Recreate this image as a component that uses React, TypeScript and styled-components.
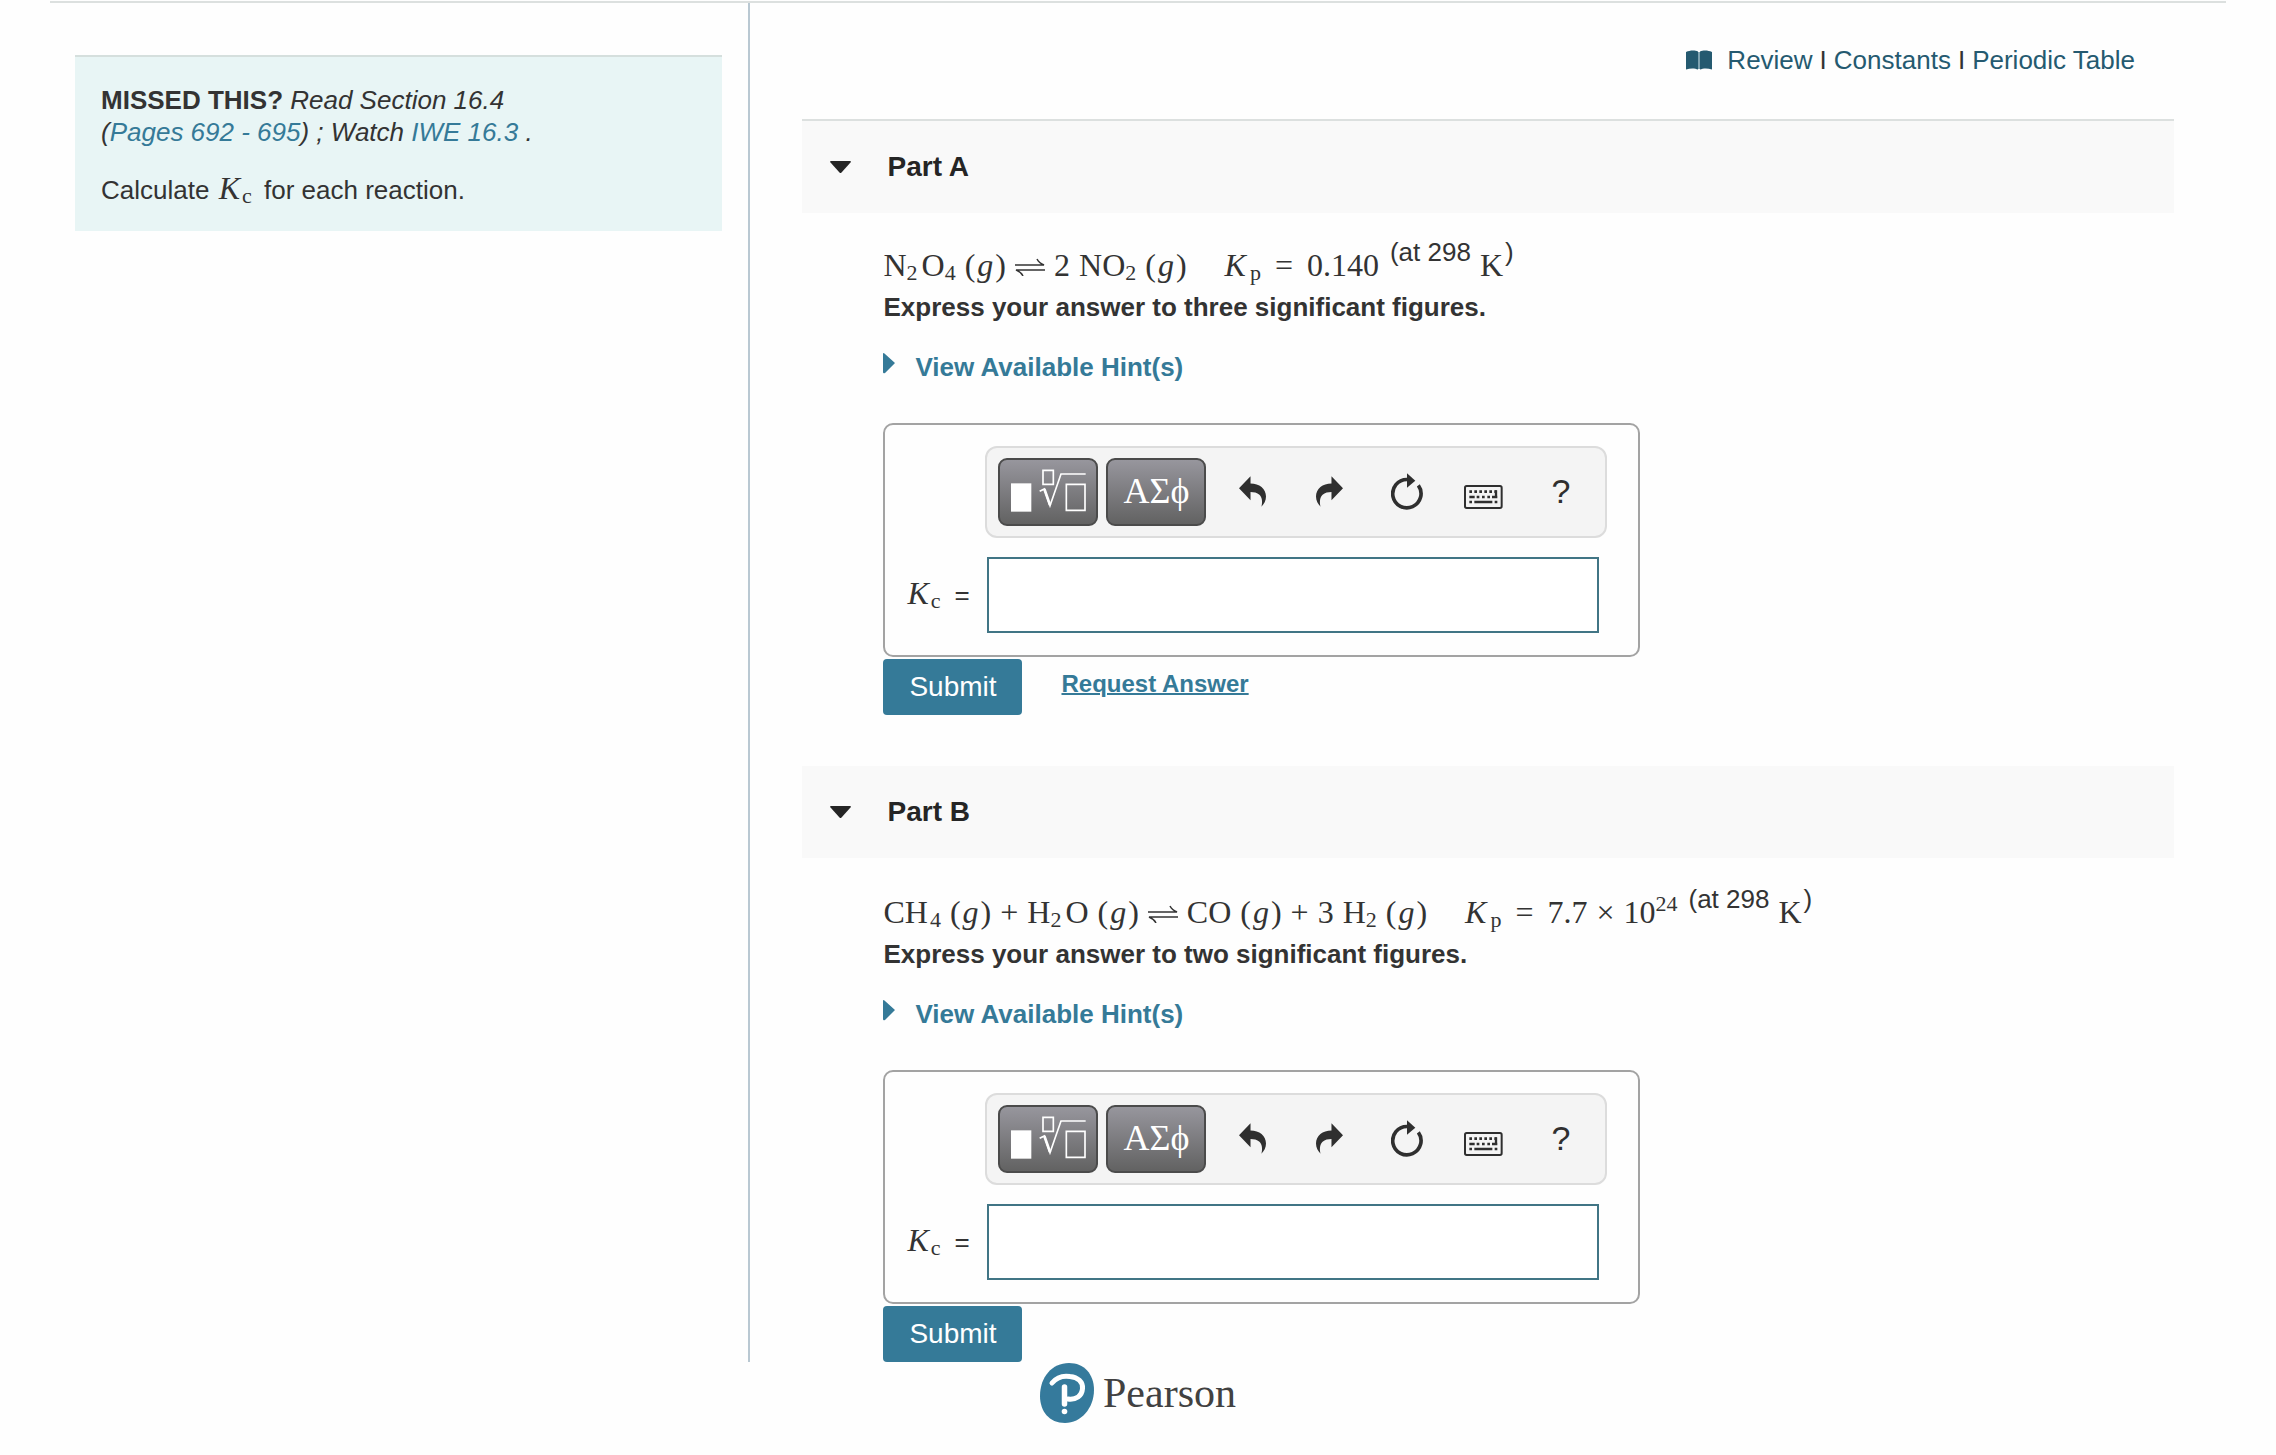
import React from "react";
import styled, { createGlobalStyle } from "styled-components";

const sans = `"Liberation Sans", Helvetica, Arial, sans-serif`;
const serif = `"Liberation Serif", "Times New Roman", serif`;

const colors = {
  ink: "#333333",
  heading: "#252525",
  link: "#357a98",
  darkLink: "#255a70",
  rule: "#dce0df",
  divider: "#b9c8d2",
};

const GlobalStyle = createGlobalStyle`
  *, *::before, *::after { box-sizing: border-box; }
  body {
    margin: 0;
    background: #fefefe;
    color: ${colors.ink};
    font: 26px/32px ${sans};
  }
  h2, p { margin: 0; }
  a { color: inherit; text-decoration: none; }
  button { font: inherit; cursor: pointer; border: 0; background: none; padding: 0; }
  svg { display: block; }
`;

const Page = styled.div`
  padding: 1px 50px 0;
`;

const Columns = styled.div`
  display: grid;
  grid-template-columns: 32.1% minmax(0, 1fr);
  border-top: 2px solid ${colors.rule};
`;

const Sidebar = styled.aside`
  padding: 52px 26px 0 25px;
`;

const Notice = styled.section`
  padding: 27px 26px 25px;
  border-top: 2px solid #d5dfdd;
  background: #e8f5f5;
`;

const NoticeLead = styled.p`
  margin-bottom: 26px;
  font-style: italic;

  strong { font-style: normal; }
  a { color: ${colors.link}; }
`;

const Content = styled.main`
  padding: 41px 52px 0;
  border-left: 2px solid ${colors.divider};
`;

const Resources = styled.nav`
  display: flex;
  justify-content: flex-end;
  align-items: center;
  gap: 7px;
  padding-right: 39px;
  margin-bottom: 43px;

  a { color: ${colors.darkLink}; }
  svg { margin-right: 8px; }
`;

const Part = styled.section`
  & + & { margin-top: 51px; }
`;

const PartHeader = styled.header<{ $ruled?: boolean }>`
  border-top: ${(p) => (p.$ruled ? `2px solid ${colors.rule}` : "0")};
  margin-bottom: ${(p) => (p.$ruled ? 0 : 2)}px;
  background: #f9f9f9;
`;

const PartToggle = styled.button`
  display: flex;
  align-items: center;
  gap: 36px;
  width: 100%;
  height: 92px;
  padding: 0 28px;
  color: ${colors.heading};
  font-size: 28px;
  font-weight: bold;
`;

const PartBody = styled.div`
  padding: 32px 0 0 81px;
`;

const Equation = styled.p`
  margin-bottom: 6px;
  font-family: ${serif};
  font-size: 32px;
  line-height: 40px;
  white-space: nowrap;
`;

const gaps = { none: 0, hair: 2, thin: 4, mid: 9, loose: 11, wide: 14, quad: 38 };
type GapName = keyof typeof gaps;

const Term = styled.span<{ $gap?: GapName }>`
  margin-left: ${(p) => gaps[p.$gap ?? "none"]}px;
  font-family: ${serif};
  font-size: 32px;
  line-height: 0;
`;

const Variable = styled(Term)`
  font-style: italic;
`;

const Sub = styled.sub<{ $gap?: GapName }>`
  margin-left: ${(p) => gaps[p.$gap ?? "none"]}px;
  font-family: ${serif};
  font-size: 22px;
  font-style: normal;
  line-height: 0;
  vertical-align: -4px;
`;

const Sup = styled.sup`
  font-size: 22px;
  line-height: 0;
  vertical-align: 12px;
`;

const Raised = styled.sup<{ $gap?: GapName }>`
  margin-left: ${(p) => gaps[p.$gap ?? "none"]}px;
  font-family: ${sans};
  font-size: 26px;
  line-height: 0;
  vertical-align: 15px;
`;

const InlineMath = styled.span`
  margin: 0 5px 0 2px;
`;

const Harpoons = styled.svg`
  display: inline-block;
  margin-left: 9px;
`;

const Instruction = styled.p`
  margin-bottom: 28px;
  font-weight: bold;
`;

const HintButton = styled.button`
  display: flex;
  gap: 20px;
  margin-bottom: 40px;
  color: ${colors.link};
  font-weight: bold;
`;

const AnswerBox = styled.div`
  display: grid;
  grid-template-columns: 100px minmax(0, 1fr);
  row-gap: 19px;
  align-items: center;
  max-width: 757px;
  padding: 21px 31px 22px 0;
  border: 2px solid #a3a3a3;
  border-radius: 10px;
`;

const Toolbar = styled.div`
  grid-column: 2;
  display: flex;
  align-items: center;
  gap: 8px;
  height: 92px;
  padding-left: 11px;
  border: 2px solid #dcdcdc;
  border-radius: 12px;
  background: #f4f4f4;
`;

const PaletteButton = styled.button`
  display: flex;
  flex: none;
  align-items: center;
  justify-content: center;
  width: 100px;
  height: 68px;
  padding-bottom: 3px;
  border: 2px solid #4b4b4b;
  border-radius: 9px;
  background: linear-gradient(#97969d, #626262);
  color: #ffffff;
  font-family: ${serif};
  font-size: 36px;
`;

const Tools = styled.div`
  display: flex;
`;

const ToolButton = styled.button`
  display: flex;
  align-items: center;
  justify-content: center;
  width: 77px;
  height: 68px;
  padding-bottom: 2px;
  color: #2f2f2f;
  font-size: 34px;
`;

const AnswerLabel = styled.label`
  padding-left: 22px;
  white-space: nowrap;
`;

const Equals = styled.span`
  margin-left: 14px;
`;

const AnswerInput = styled.input`
  height: 76px;
  margin: 0 8px 0 2px;
  padding: 0 16px;
  border: 2px solid #417585;
  border-radius: 0;
  background: #ffffff;
  color: inherit;
  font: 28px ${sans};
`;

const Actions = styled.div`
  display: flex;
  gap: 39px;
  margin-top: 2px;
`;

const SubmitButton = styled.button`
  width: 139px;
  height: 56px;
  border-radius: 4px;
  background: ${colors.link};
  color: #ffffff;
  font-size: 28px;
`;

const RequestLink = styled.a`
  align-self: flex-start;
  padding-top: 9px;
  color: ${colors.link};
  font-size: 24px;
  font-weight: bold;
  text-decoration: underline 2px;
`;

const Footer = styled.footer`
  display: flex;
  justify-content: center;
  align-items: center;
  gap: 9px;
  padding: 1px 0 30px;
  color: #414141;
  font-family: ${serif};
  font-size: 42px;
  line-height: 58px;
`;

const BookIcon = () => (
  <svg width="26" height="20" viewBox="0 0 26 20" aria-hidden="true">
    <path d="M0 2C4 0 9 0 12 1.500V19.500C9 18 4 18 0 19.500Z" fill="#255a70" />
    <path d="M14 1.500C17 0 22 0 26 2V19.500C22 18 17 18 14 19.500Z" fill="#255a70" />
    <path d="M13 2V19" stroke="#7fa3b1" strokeWidth="2" />
  </svg>
);

const CaretDown = () => (
  <svg width="21" height="12" viewBox="0 0 21 12" aria-hidden="true">
    <path d="M1 0H20Q21.500 0 20.500 1.500L11.500 11.500Q10.500 12.500 9.500 11.500L.5 1.500Q-.5 0 1 0Z" fill="currentColor" />
  </svg>
);

const CaretRight = () => (
  <svg width="12" height="24" viewBox="0 0 12 24" aria-hidden="true">
    <path d="M0 3Q0 1 2 3L12 12L2 22Q0 23 0 21Z" fill="currentColor" />
  </svg>
);

const Equilibrium = () => (
  <Harpoons width="30" height="20" viewBox="0 0 30 20" role="img" aria-label="is in equilibrium with">
    <path d="M0 9H29Q24 7 22 3M30 14H1Q6 16 8 20" fill="none" stroke="#333333" strokeWidth="1.500" />
  </Harpoons>
);

const TemplateIcon = () => (
  <svg width="75" height="43" viewBox="434 180 225 129" fill="none" stroke="#ffffff" strokeWidth="5" aria-hidden="true">
    <path d="M434 223H495V308H434Z" fill="#ffffff" stroke="none" />
    <path d="M530 184H561V226H530Z M600 226H656V304H600Z" />
    <path d="M520 247L534 240L551 290L584 195H658" />
    <path d="M534 240L551 288" strokeWidth="8" />
  </svg>
);

const UndoIcon = () => (
  <svg width="27" height="31" viewBox="0 0 82 93" fill="currentColor" aria-hidden="true">
    <path d="M0 37L35 0V22C62 22 82 38 82 62C82 75 76 85 68 93C71 82 72 66 62 56C55 50 45 48 35 48V73Z" />
  </svg>
);

const RedoIcon = () => (
  <svg width="27" height="31" viewBox="0 0 82 93" fill="currentColor" aria-hidden="true">
    <path d="M82 37L47 0V22C20 22 0 38 0 62C0 75 6 85 14 93C11 82 10 66 20 56C27 50 37 48 47 48V73Z" />
  </svg>
);

const ResetIcon = () => (
  <svg width="32" height="37" viewBox="0 0 96 111" aria-hidden="true">
    <path d="M82 37A42.500 42.500 0 1 1 48 19.500" fill="none" stroke="currentColor" strokeWidth="11" />
    <path d="M48 1L73 23L48 44Z" fill="currentColor" />
  </svg>
);

const KeyboardIcon = () => (
  <svg width="39" height="36" viewBox="0 -32 117 108" aria-hidden="true">
    <rect x="3" y="7" width="110" height="66" rx="5" fill="none" stroke="currentColor" strokeWidth="6" />
    <path d="M16 24H98" stroke="currentColor" strokeWidth="8" strokeDasharray="8 7" />
    <path d="M16 40H32M38 40H46M54 40H62M70 40H78M84 40H100M96 20V44" stroke="currentColor" strokeWidth="7" />
    <path d="M16 55H24M31 55H85M92 55H100" stroke="currentColor" strokeWidth="8" />
  </svg>
);

const PearsonMark = () => (
  <svg width="54" height="60" viewBox="0 0 54 60" aria-hidden="true">
    <path d="M29 0C44 0 54 11 54 27C54 45 41 60 25 60C9 60 0 48 0 33C0 14 12 0 29 0Z" fill="#357a9c" />
    <path d="M12 20C17 14 24 12.500 30 13.500C38 14.500 43 19 42.500 25.500C42 33 36 37 28 36" fill="none" stroke="#fff" strokeWidth="5" strokeLinecap="round" />
    <path d="M24.500 24V41" stroke="#fff" strokeWidth="5.500" strokeLinecap="round" />
    <circle cx="24.500" cy="48.500" r="2.800" fill="#fff" />
  </svg>
);

const Gas = () => (
  <>
    <Term $gap="mid">(</Term>
    <Variable $gap="hair">g</Variable>
    <Term $gap="hair">)</Term>
  </>
);

const Temperature = () => (
  <>
    <Raised $gap="loose">(at 298</Raised>
    <Term $gap="mid">K</Term>
    <Raised $gap="hair">)</Raised>
  </>
);

const EquationA = () => (
  <Equation>
    <Term>N</Term>
    <Sub>2</Sub>
    <Term $gap="thin">O</Term>
    <Sub>4</Sub>
    <Gas />
    <Equilibrium />
    <Term $gap="mid">2</Term>
    <Term $gap="mid">NO</Term>
    <Sub>2</Sub>
    <Gas />
    <Variable $gap="quad">K</Variable>
    <Sub $gap="thin">p</Sub>
    <Term $gap="wide">=</Term>
    <Term $gap="wide">0.140</Term>
    <Temperature />
  </Equation>
);

const EquationB = () => (
  <Equation>
    <Term>CH</Term>
    <Sub $gap="hair">4</Sub>
    <Gas />
    <Term $gap="mid">+</Term>
    <Term $gap="mid">H</Term>
    <Sub>2</Sub>
    <Term $gap="thin">O</Term>
    <Gas />
    <Equilibrium />
    <Term $gap="mid">CO</Term>
    <Gas />
    <Term $gap="mid">+</Term>
    <Term $gap="mid">3</Term>
    <Term $gap="mid">H</Term>
    <Sub>2</Sub>
    <Gas />
    <Variable $gap="quad">K</Variable>
    <Sub $gap="thin">p</Sub>
    <Term $gap="wide">=</Term>
    <Term $gap="wide">7.7</Term>
    <Term $gap="mid">×</Term>
    <Term $gap="mid">10</Term>
    <Sup>24</Sup>
    <Temperature />
  </Equation>
);

interface QuestionPartProps {
  id: string;
  title: string;
  equation: React.ReactNode;
  instruction: string;
  ruled?: boolean;
  canRequest?: boolean;
}

const QuestionPart = ({ id, title, equation, instruction, ruled, canRequest }: QuestionPartProps) => (
  <Part>
    <PartHeader $ruled={ruled}>
      <h2>
        <PartToggle type="button" aria-expanded="true">
          <CaretDown />
          {title}
        </PartToggle>
      </h2>
    </PartHeader>
    <PartBody>
      {equation}
      <Instruction>{instruction}</Instruction>
      <HintButton type="button">
        <CaretRight />
        View Available Hint(s)
      </HintButton>
      <AnswerBox>
        <Toolbar role="toolbar" aria-label="Equation editor">
          <PaletteButton type="button" aria-label="Templates">
            <TemplateIcon />
          </PaletteButton>
          <PaletteButton type="button">ΑΣϕ</PaletteButton>
          <Tools>
            <ToolButton type="button" aria-label="Undo"><UndoIcon /></ToolButton>
            <ToolButton type="button" aria-label="Redo"><RedoIcon /></ToolButton>
            <ToolButton type="button" aria-label="Reset"><ResetIcon /></ToolButton>
            <ToolButton type="button" aria-label="Keyboard shortcuts"><KeyboardIcon /></ToolButton>
            <ToolButton type="button">?</ToolButton>
          </Tools>
        </Toolbar>
        <AnswerLabel htmlFor={id}>
          <Variable>K</Variable>
          <Sub $gap="hair">c</Sub>
          <Equals>=</Equals>
        </AnswerLabel>
        <AnswerInput id={id} type="text" autoComplete="off" />
      </AnswerBox>
      <Actions>
        <SubmitButton type="submit">Submit</SubmitButton>
        {canRequest && <RequestLink href="#request">Request Answer</RequestLink>}
      </Actions>
    </PartBody>
  </Part>
);

export default function App() {
  return (
    <>
      <GlobalStyle />
      <Page>
        <Columns>
          <Sidebar>
            <Notice>
              <NoticeLead>
                <strong>MISSED THIS?</strong> Read Section 16.4
                <br />(<a href="#pages">Pages 692 - 695</a>) ; Watch <a href="#iwe">IWE 16.3</a> .
              </NoticeLead>
              <p>
                Calculate{" "}
                <InlineMath>
                  <Variable>K</Variable>
                  <Sub $gap="hair">c</Sub>
                </InlineMath>{" "}
                for each reaction.
              </p>
            </Notice>
          </Sidebar>
          <Content>
            <Resources>
              <BookIcon />
              <a href="#review">Review</a>
              <span>I</span>
              <a href="#constants">Constants</a>
              <span>I</span>
              <a href="#periodic">Periodic Table</a>
            </Resources>
            <QuestionPart
              id="answer-a"
              title="Part A"
              equation={<EquationA />}
              instruction="Express your answer to three significant figures."
              ruled
              canRequest
            />
            <QuestionPart
              id="answer-b"
              title="Part B"
              equation={<EquationB />}
              instruction="Express your answer to two significant figures."
            />
          </Content>
        </Columns>
        <Footer>
          <PearsonMark />
          <span>Pearson</span>
        </Footer>
      </Page>
    </>
  );
}
